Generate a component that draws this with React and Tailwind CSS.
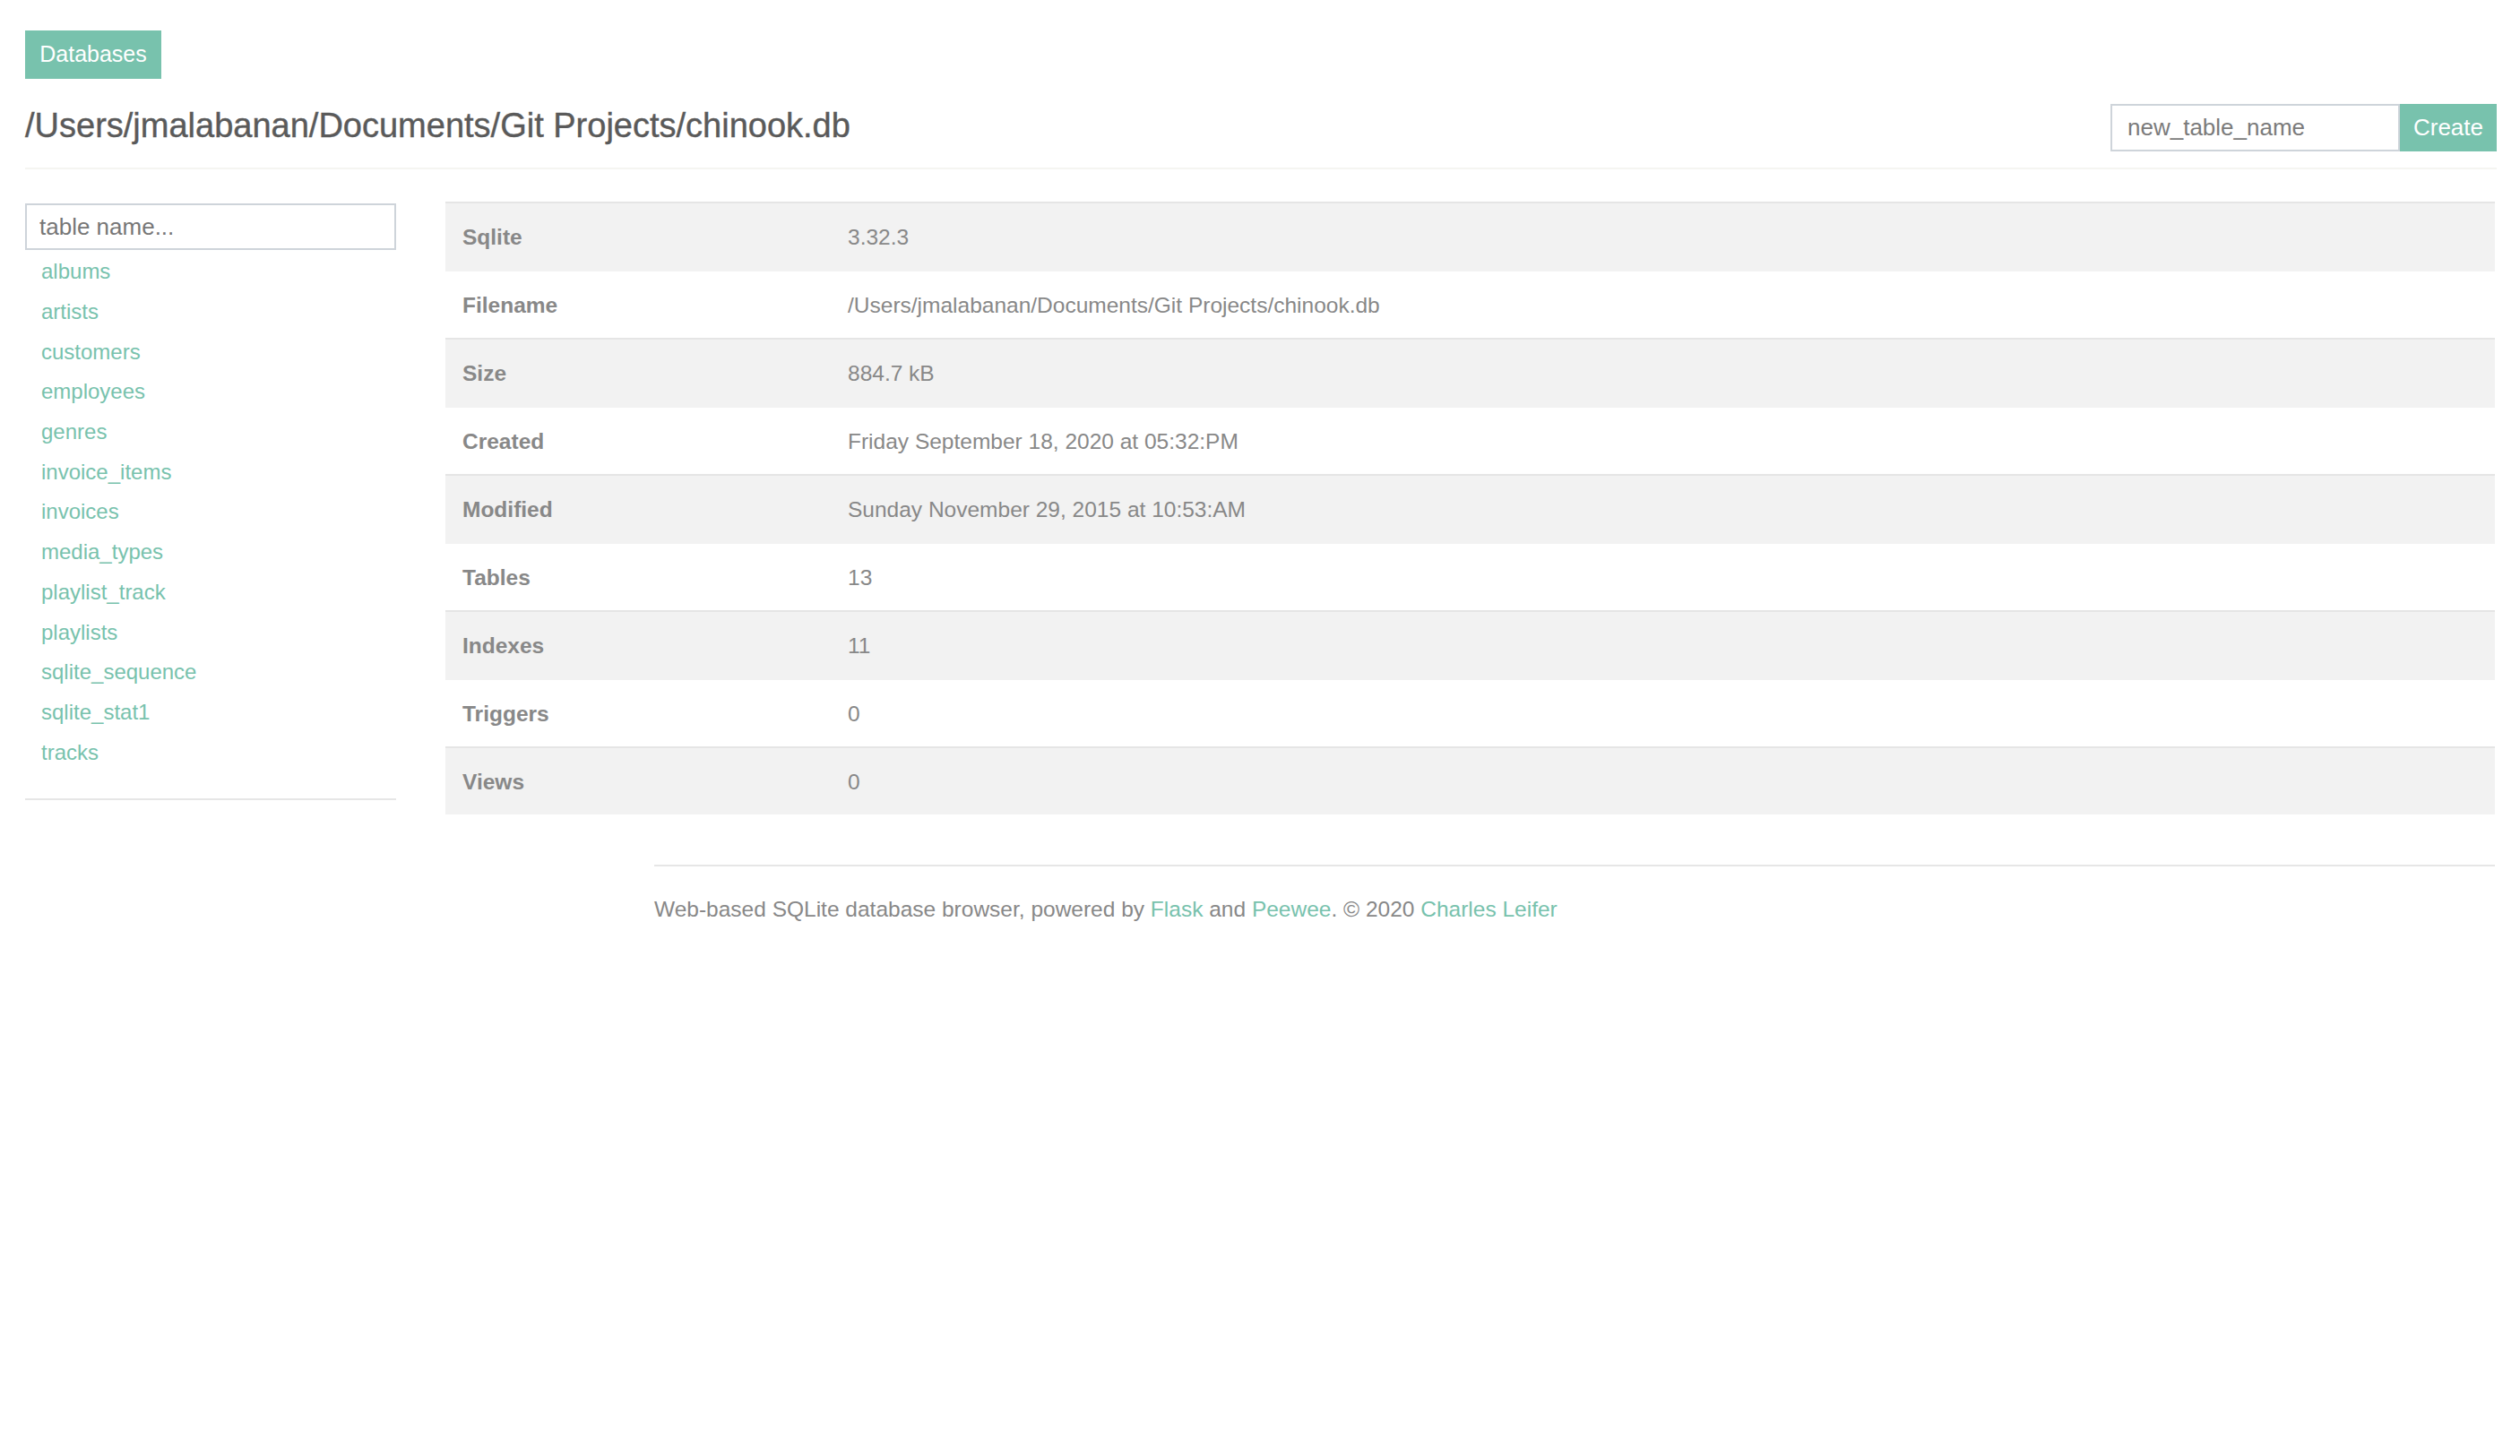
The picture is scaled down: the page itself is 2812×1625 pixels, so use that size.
import React from 'react';

const TABLES = [
  'albums', 'artists', 'customers', 'employees', 'genres', 'invoice_items', 'invoices',
  'media_types', 'playlist_track', 'playlists', 'sqlite_sequence', 'sqlite_stat1', 'tracks',
];

const INFO = [
  ['Sqlite', '3.32.3'],
  ['Filename', '/Users/jmalabanan/Documents/Git Projects/chinook.db'],
  ['Size', '884.7 kB'],
  ['Created', 'Friday September 18, 2020 at 05:32:PM'],
  ['Modified', 'Sunday November 29, 2015 at 10:53:AM'],
  ['Tables', '13'],
  ['Indexes', '11'],
  ['Triggers', '0'],
  ['Views', '0'],
];

export default function App() {
  return (
    <div className="min-h-screen bg-white px-[28px] pt-[34px] font-['Liberation_Sans',Arial,sans-serif] text-[#888]">
      {/* header */}
      <div className="-mr-[2px] border-b-2 border-[#f5f5f1] pb-[18px]">
        <a className="inline-flex h-[54px] w-[152px] items-center justify-center bg-[#78c2ad] text-[25px] text-white">
          Databases
        </a>
        <div className="mt-[28px] flex items-center justify-between">
          <h1 className="-mt-[6px] text-[38px] leading-[44px] text-[#5a5a5a] [-webkit-text-stroke:0.4px_#5a5a5a]">
            /Users/jmalabanan/Documents/Git Projects/chinook.db
          </h1>
          <div className="flex h-[53px]">
            <input
              className="h-full w-[323px] border-2 border-[#ced4da] px-[17px] text-[26px] text-[#5a5a5a] placeholder-[#7b7b7b] outline-none"
              placeholder="new_table_name"
            />
            <button className="h-full w-[108px] bg-[#78c2ad] text-[26px] text-white">Create</button>
          </div>
        </div>
      </div>

      <div className="mt-[36px] flex">
        {/* sidebar */}
        <div className="w-[414px] shrink-0">
          <input
            className="mt-[2px] h-[52px] w-full border-2 border-[#ced4da] px-[14px] text-[26px] text-[#5a5a5a] placeholder-[#777] outline-none"
            placeholder="table name..."
          />
          <ul className="mt-[2px]">
            {TABLES.map(t => (
              <li key={t} className="flex h-[44.7px] items-center pl-[18px] text-[24px] text-[#78c2ad]">
                <a>{t}</a>
              </li>
            ))}
          </ul>
          <div className="mt-[29px] border-t-2 border-[#e6e6e6]"></div>
        </div>

        {/* main */}
        <div className="ml-[55px] flex-1">
          <div>
            {INFO.map(([k, v], i) => (
              <div
                key={k}
                className={`flex h-[76px] items-center border-t-2 border-[rgba(0,0,0,0.05)] pt-[2px] text-[24.5px] ${i % 2 === 0 ? 'bg-[rgba(0,0,0,0.05)]' : ''}`}
              >
                <div className="w-[449px] shrink-0 pl-[19px] font-bold">{k}</div>
                <div>{v}</div>
              </div>
            ))}
          </div>
        </div>
      </div>

      {/* footer */}
      <div className="ml-[702px] mt-[56px] border-t-2 border-[#e6e6e6] pt-[30px] text-[24.5px]">
        Web-based SQLite database browser, powered by{' '}
        <a className="text-[#78c2ad]">Flask</a> and{' '}
        <a className="text-[#78c2ad]">Peewee</a>. © 2020{' '}
        <a className="text-[#78c2ad]">Charles Leifer</a>
      </div>
    </div>
  );
}
